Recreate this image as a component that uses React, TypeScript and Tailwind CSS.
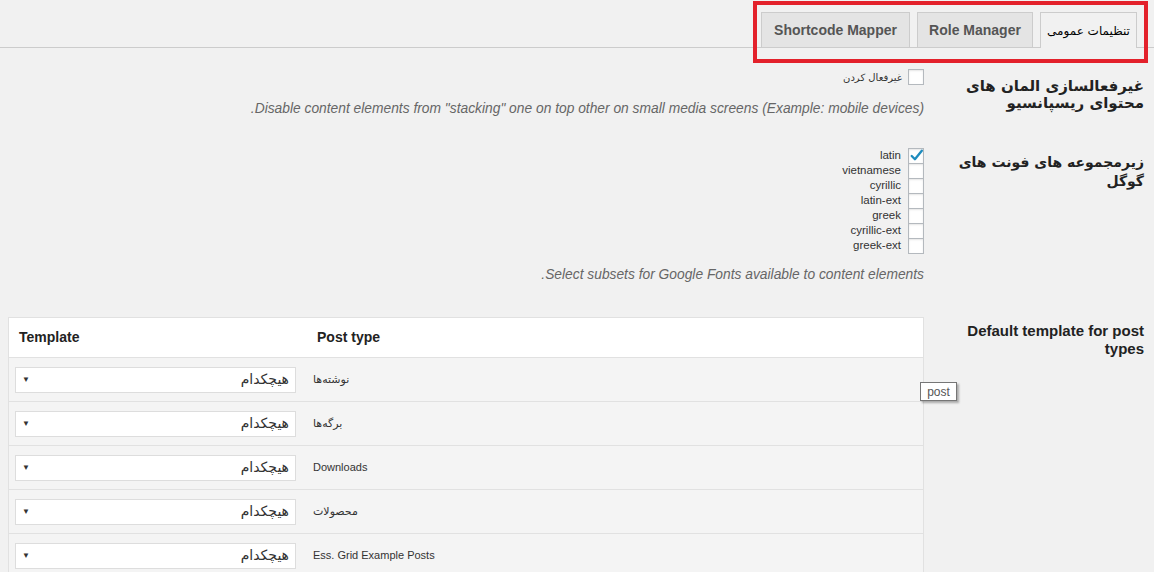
import React from "react";

const Checkbox = ({ checked = false }: { checked?: boolean }) => (
  <div className="relative w-[16px] h-[16px] shrink-0 border border-[#b4b9be] bg-white shadow-[inset_0_1px_2px_rgba(0,0,0,0.1)]">
    {checked && (
      <svg viewBox="0 0 16 16" className="absolute left-[-1px] top-[-2px] w-[17px] h-[17px]">
        <path d="M3.5 8.5 L6.5 11.5 L13 3.5" fill="none" stroke="#1e8cbe" strokeWidth="2.2" strokeLinecap="round" strokeLinejoin="round" />
      </svg>
    )}
  </div>
);

const subsets = ["latin", "vietnamese", "cyrillic", "latin-ext", "greek", "cyrillic-ext", "greek-ext"];
const postTypes = ["نوشته‌ها", "برگه‌ها", "Downloads", "محصولات", "Ess. Grid Example Posts"];

export default function App() {
  return (
    <div
      dir="rtl"
      className="relative w-[1154px] h-[572px] overflow-hidden bg-[#f1f1f1] text-[#444] font-['Liberation_Sans','DejaVu_Sans',sans-serif]"
    >
      {/* Tabs */}
      <div className="flex items-end gap-[7px] h-[48px] border-b border-[#ccc] pr-[17px]">
        <div className="w-[97px] h-[36px] -mb-px flex items-center justify-center border border-b-0 border-[#ccc] bg-[#f1f1f1] text-[12px] text-black font-['DejaVu_Sans',sans-serif]">
          تنظیمات عمومی
        </div>
        <div className="w-[116px] h-[35px] flex items-center justify-center border border-b-0 border-[#ccc] bg-[#e4e4e4] text-[14px] font-bold text-[#555]">
          Role Manager
        </div>
        <div className="w-[149px] h-[35px] flex items-center justify-center border border-b-0 border-[#ccc] bg-[#e4e4e4] text-[14px] font-bold text-[#555]">
          Shortcode Mapper
        </div>
      </div>

      {/* Row 1 */}
      <div className="flex gap-[20px] pr-[10px] pl-[8px] mt-[21px]">
        <div className="w-[200px] shrink-0 pt-[9px] text-right text-[15px] leading-[17px] font-bold text-[#222] whitespace-nowrap font-['DejaVu_Sans',sans-serif]">
          غیرفعالسازی المان های
          <br />
          محتوای ریسپانسیو
        </div>
        <div className="flex-1">
          <div className="flex items-center gap-[6px] h-[16px]">
            <Checkbox />
            <span className="text-[10px] text-[#333] font-['DejaVu_Sans',sans-serif]">غیرفعال کردن</span>
          </div>
          <div className="mt-[16px] text-[13.8px] leading-[16px] italic text-[#666]">
            Disable content elements from "stacking" one on top other on small media screens (Example: mobile devices).
          </div>
        </div>
      </div>

      {/* Row 2 */}
      <div className="flex gap-[20px] pr-[10px] pl-[8px] mt-[31px]">
        <div className="w-[200px] shrink-0 pt-[5px] text-right text-[14px] leading-[19px] font-bold text-[#222] whitespace-nowrap font-['DejaVu_Sans',sans-serif]">
          زیرمجموعه های فونت های
          <br />
          گوگل
        </div>
        <div className="flex-1">
          <div className="flex flex-col">
            {subsets.map((s, i) => (
              <div key={s} className="flex items-start gap-[7px] h-[15px]">
                <Checkbox checked={i === 0} />
                <span className="text-[11.5px] leading-[15px] text-[#333]">{s}</span>
              </div>
            ))}
          </div>
          <div className="mt-[14px] text-[13.8px] leading-[16px] italic text-[#666]">
            Select subsets for Google Fonts available to content elements.
          </div>
        </div>
      </div>

      {/* Row 3 */}
      <div className="flex gap-[20px] pr-[10px] pl-[8px] mt-[34px]">
        <div className="w-[200px] shrink-0 pt-[5px] text-right text-[15px] leading-[18px] font-bold text-[#222]">
          Default template for post types
        </div>
        <div className="flex-1">
          <div dir="ltr" className="border border-[#e1e1e1] bg-white">
            <div className="flex items-center h-[39px]">
              <div className="w-[296px] pl-[10px] text-[14px] font-bold text-[#222]">Template</div>
              <div className="pl-[12px] text-[14px] font-bold text-[#222]">Post type</div>
            </div>
            {postTypes.map((p) => (
              <div key={p} className="flex items-center h-[44px] border-t border-[#e1e1e1] bg-[#f4f4f4]">
                <div className="w-[296px] pl-[6px]">
                  <div className="w-[281px] h-[26px] flex items-center justify-between px-[6px] border border-[#ddd] bg-white">
                    <span className="text-[8px] text-[#333]">▼</span>
                    <span dir="rtl" className="text-[14px] text-[#333] font-['DejaVu_Sans',sans-serif]">هیچکدام</span>
                  </div>
                </div>
                <div className="pl-[8px] text-[11px] text-[#333]">
                  <span dir="auto">{p}</span>
                </div>
              </div>
            ))}
          </div>
        </div>
      </div>

      {/* Tooltip */}
      <div dir="ltr" className="absolute left-[920px] top-[382px] w-[37px] h-[19px] flex items-center justify-center bg-white border border-[#767676] text-[12px] text-[#555] shadow-[2px_2px_2px_rgba(0,0,0,0.3)]">
        post
      </div>

      {/* Red annotation box */}
      <div className="absolute left-[753px] top-[1px] w-[395px] h-[62px] border-[4px] border-[#e3212b]" />
    </div>
  );
}
